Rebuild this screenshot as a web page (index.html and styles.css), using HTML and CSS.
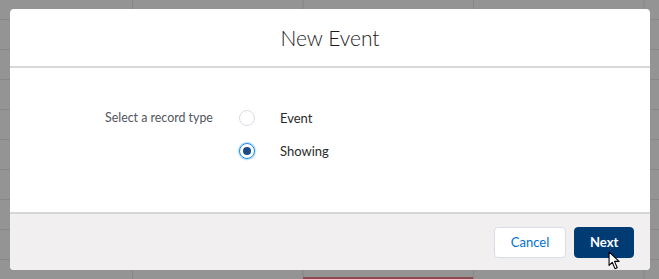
FILE: index.html
```html
<!DOCTYPE html>
<html lang="en">
<head>
  <meta charset="UTF-8" />
  <title>New Event</title>
  <link rel="stylesheet" href="styles.css">
</head>
<body>

<div class="modal">
  <div class="modal-header">
    <h2>New Event</h2>
  </div>
  <div class="modal-body">
    <div class="field-label">Select a record type</div>
    <div class="radio-list">
      <label class="radio">
        <span class="radio-faux"></span>
        <span class="radio-text">Event</span>
      </label>
      <label class="radio checked">
        <span class="radio-faux"></span>
        <span class="radio-text">Showing</span>
      </label>
    </div>
  </div>
  <div class="modal-footer">
    <button class="btn btn-neutral">Cancel</button>
    <button class="btn btn-brand">Next</button>
    <svg class="cursor" width="13" height="19" viewBox="0 0 14 21">
      <path d="M1 1 L1 16 L4.5 12.5 L7.5 19.5 L10 18.5 L7 11.5 L12 11.5 Z" fill="#fff" stroke="#000" stroke-width="1.2" stroke-linejoin="round"/>
    </svg>
  </div>
</div>

<div class="under-bar"></div>

</body>
</html>
```

FILE: styles.css
```css
body {
  margin: 0;
  height: 279px;
  overflow: hidden;
  font-family: 'Lato', 'Liberation Sans', sans-serif;
  background-color: #949494;
  background-image:
    linear-gradient(to right, #868686 1px, transparent 1px),
    linear-gradient(to bottom, #888888 1px, transparent 1px);
  background-size: 170.5px 100%, 100% 30px;
  background-position: 132px 0, 0 19px;
  position: relative;
}
.modal {
  width: 640px;
  margin: 9px 0 0 10px;
  background: white;
  border-radius: 4px;
  overflow: hidden;
}
.modal-header {
  height: 57px;
  display: flex;
  align-items: center;
  justify-content: center;
  border-bottom: 2px solid #d8d8d8;
}
.modal-header h2 {
  margin: 0;
  font-weight: 300;
  font-size: 21px;
  color: #1b1b1b;
}
.modal-body {
  height: 144px;
  display: flex;
  padding: 42px 0 0 95px;
  box-sizing: border-box;
}
.field-label {
  width: 134px;
  font-size: 12.4px;
  color: #51565e;
  line-height: 16px;
}
.radio-list {
  display: flex;
  flex-direction: column;
  gap: 17px;
}
.radio {
  display: flex;
  align-items: center;
  height: 16px;
  font-size: 13px;
  color: #2b2b2b;
}
.radio-faux {
  width: 14px;
  height: 14px;
  border: 1px solid #d8dde6;
  border-radius: 50%;
  margin-right: 25px;
  display: flex;
  align-items: center;
  justify-content: center;
}
.checked .radio-faux {
  border-color: #1589ee;
  box-shadow: 0 0 2px #1589ee;
}
.checked .radio-faux::after {
  content: "";
  width: 8px;
  height: 8px;
  border-radius: 50%;
  background: #1c4a87;
}
.modal-footer {
  height: 56px;
  background: #f1eff0;
  border-top: 2px solid #d6d6d6;
  display: flex;
  justify-content: flex-end;
  align-items: center;
  gap: 8px;
  padding-right: 16px;
  position: relative;
}
.btn {
  height: 31px;
  border-radius: 4px;
  font-family: inherit;
  font-size: 13px;
  padding: 0 15px;
  cursor: pointer;
}
.btn-neutral {
  width: 72px;
  background: white;
  border: 1px solid #d8dde6;
  color: #0070d2;
}
.btn-brand {
  width: 60px;
  background: #003b73;
  border: 1px solid #003b73;
  color: white;
  font-weight: bold;
}
.cursor {
  position: absolute;
  left: 598px;
  top: 37px;
}
.under-bar {
  position: absolute;
  left: 303px;
  top: 277px;
  width: 170px;
  height: 2px;
  background: #8c4a52;
}
```
